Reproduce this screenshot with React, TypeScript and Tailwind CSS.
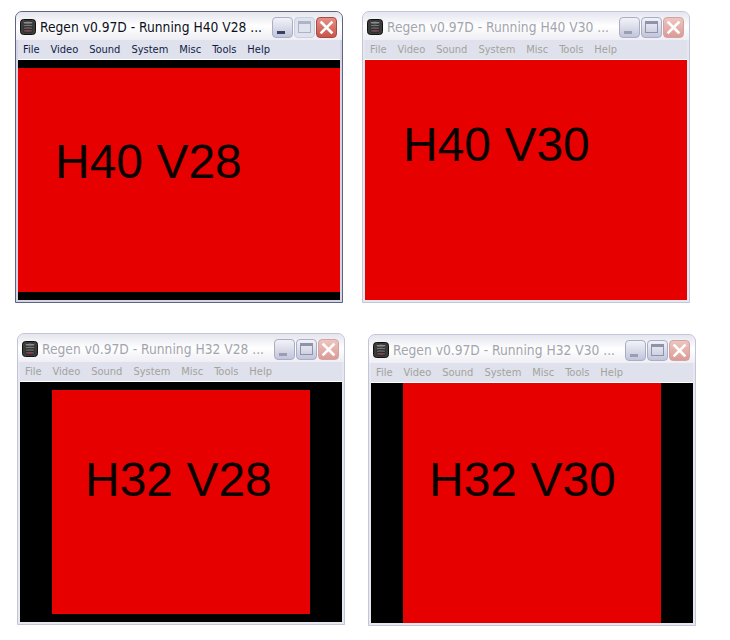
import type { ReactNode } from "react";

const menuItems = ["File", "Video", "Sound", "System", "Misc", "Tools", "Help"];

// little stacked-discs app icon
const RegenIcon = () => (
  <svg width="16" height="16" viewBox="0 0 16 16" className="shrink-0">
    <rect x="0.5" y="0.5" width="15" height="15" rx="3" fill="#3c3c3c" stroke="#111" />
    <ellipse cx="8" cy="3.8" rx="5" ry="1.7" fill="#8c8c8c" stroke="#222" strokeWidth="0.8" />
    <ellipse cx="8" cy="6.6" rx="5" ry="1.5" fill="#777" stroke="#222" strokeWidth="0.8" />
    <ellipse cx="8" cy="9.2" rx="5" ry="1.5" fill="#666" stroke="#222" strokeWidth="0.8" />
    <ellipse cx="8" cy="11.8" rx="5" ry="1.6" fill="#555" stroke="#222" strokeWidth="0.8" />
    <rect x="6.5" y="11.2" width="3" height="1.2" fill="#c2284a" />
  </svg>
);

const CaptionButtons = ({ active, dimMax }: { active: boolean; dimMax?: boolean }) => (
  <div className="flex items-center gap-px shrink-0">
    <div className="flex h-[21px] w-[21px] items-end rounded-[4px] border border-[#a9adc6] bg-linear-to-b from-[#f2f3f8] to-[#c2c5da] pb-[3px] pl-[4px]">
      <div className={`h-[3px] w-[8px] ${active ? "bg-[#3a4060]" : "bg-[#9a9db4]"}`} />
    </div>
    <div
      className={`flex h-[21px] w-[21px] items-center justify-center rounded-[4px] border ${
        dimMax ? "border-[#c9cfe0] bg-[#dfe3ee]" : "border-[#a9adc6] bg-linear-to-b from-[#f2f3f8] to-[#c2c5da]"
      }`}
    >
      <div
        className={`h-[12px] w-[13px] border border-t-[3px] ${
          dimMax ? "border-[#aeb4c8]" : "border-[#8f92aa]"
        }`}
      />
    </div>
    <div
      className={`flex h-[21px] w-[21px] items-center justify-center rounded-[4px] border ${
        active
          ? "border-[#a84a44] bg-linear-to-b from-[#e58f86] to-[#c9544a]"
          : "border-[#d0a4a4] bg-linear-to-b from-[#eec5c0] to-[#dc9a96]"
      }`}
    >
      <svg width="15" height="15" viewBox="0 0 15 15">
        <path d="M2.5 2.5 L12.5 12.5 M12.5 2.5 L2.5 12.5" stroke="#fff" strokeWidth="2.6" strokeLinecap="square" />
      </svg>
    </div>
  </div>
);

type WindowProps = {
  title: string;
  active?: boolean;
  dimMax?: boolean;
  children: ReactNode;
};

const RegenWindow = ({ title, active = false, dimMax, children }: WindowProps) => (
  <div
    className={`w-[328px] h-[292px] flex flex-col rounded-t-[7px] border font-['DejaVu_Sans',sans-serif] font-stretch-semi-condensed ${
      active ? "border-[#5e6284] bg-[#d3d5e4]" : "border-[#c3c5d8] bg-[#e6e7ef]"
    }`}
  >
    <div className="flex h-[28px] shrink-0 items-center rounded-t-[6px] bg-linear-to-b from-[#e4e5ee] via-[#ffffff] to-[#eeeef4] pl-[4px] pr-[5px] pt-[2px]">
      <RegenIcon />
      <span
        className={`ml-[4px] flex-1 whitespace-nowrap text-[13.7px] ${
          active ? "text-[#0c1020]" : "text-[#a3a5ae]"
        }`}
      >
        {title}
      </span>
      <CaptionButtons active={active} dimMax={dimMax} />
    </div>
    <div className="mx-[2px] mb-[2px] flex flex-1 flex-col bg-black">
      <div
        className={`flex h-[19px] shrink-0 items-center gap-[11px] bg-[#dfe1ec] pl-[5px] pt-px text-[11px] ${
          active ? "text-[#0f1c48]" : "text-[#a3a39c]"
        }`}
      >
        {menuItems.map((item) => (
          <span key={item}>{item}</span>
        ))}
      </div>
      <div className="h-px shrink-0 bg-white" />
      <div className="flex-1 overflow-hidden">{children}</div>
    </div>
  </div>
);

const Label = ({ text }: { text: string }) => (
  <span className="font-['Liberation_Sans',sans-serif] text-[48px] leading-none text-[#0a0000] whitespace-nowrap">
    {text}
  </span>
);

export default function App() {
  return (
    <div className="h-[640px] w-[730px] overflow-hidden bg-white">
      <div className="flex gap-[19px] pl-[15px] pt-[11px]">
        <RegenWindow title="Regen v0.97D - Running H40 V28 ..." active dimMax>
          <div className="mt-[8px] h-[224px] bg-[#e60000] pl-[37px] pt-[70px]">
            <Label text="H40 V28" />
          </div>
        </RegenWindow>
        <RegenWindow title="Regen v0.97D - Running H40 V30 ...">
          <div className="h-full bg-[#e60000] pl-[38px] pt-[61px]">
            <Label text="H40 V30" />
          </div>
        </RegenWindow>
      </div>
      <div className="flex gap-[23px] pl-[17px] pt-[30px]">
        <RegenWindow title="Regen v0.97D - Running H32 V28 ...">
          <div className="mx-[32px] mt-[8px] h-[224px] bg-[#e60000] pl-[33px] pt-[66px]">
            <Label text="H32 V28" />
          </div>
        </RegenWindow>
        <div className="pt-px">
          <RegenWindow title="Regen v0.97D - Running H32 V30 ...">
            <div className="mx-[32px] h-full bg-[#e60000] pl-[26px] pt-[73px]">
              <Label text="H32 V30" />
            </div>
          </RegenWindow>
        </div>
      </div>
    </div>
  );
}
